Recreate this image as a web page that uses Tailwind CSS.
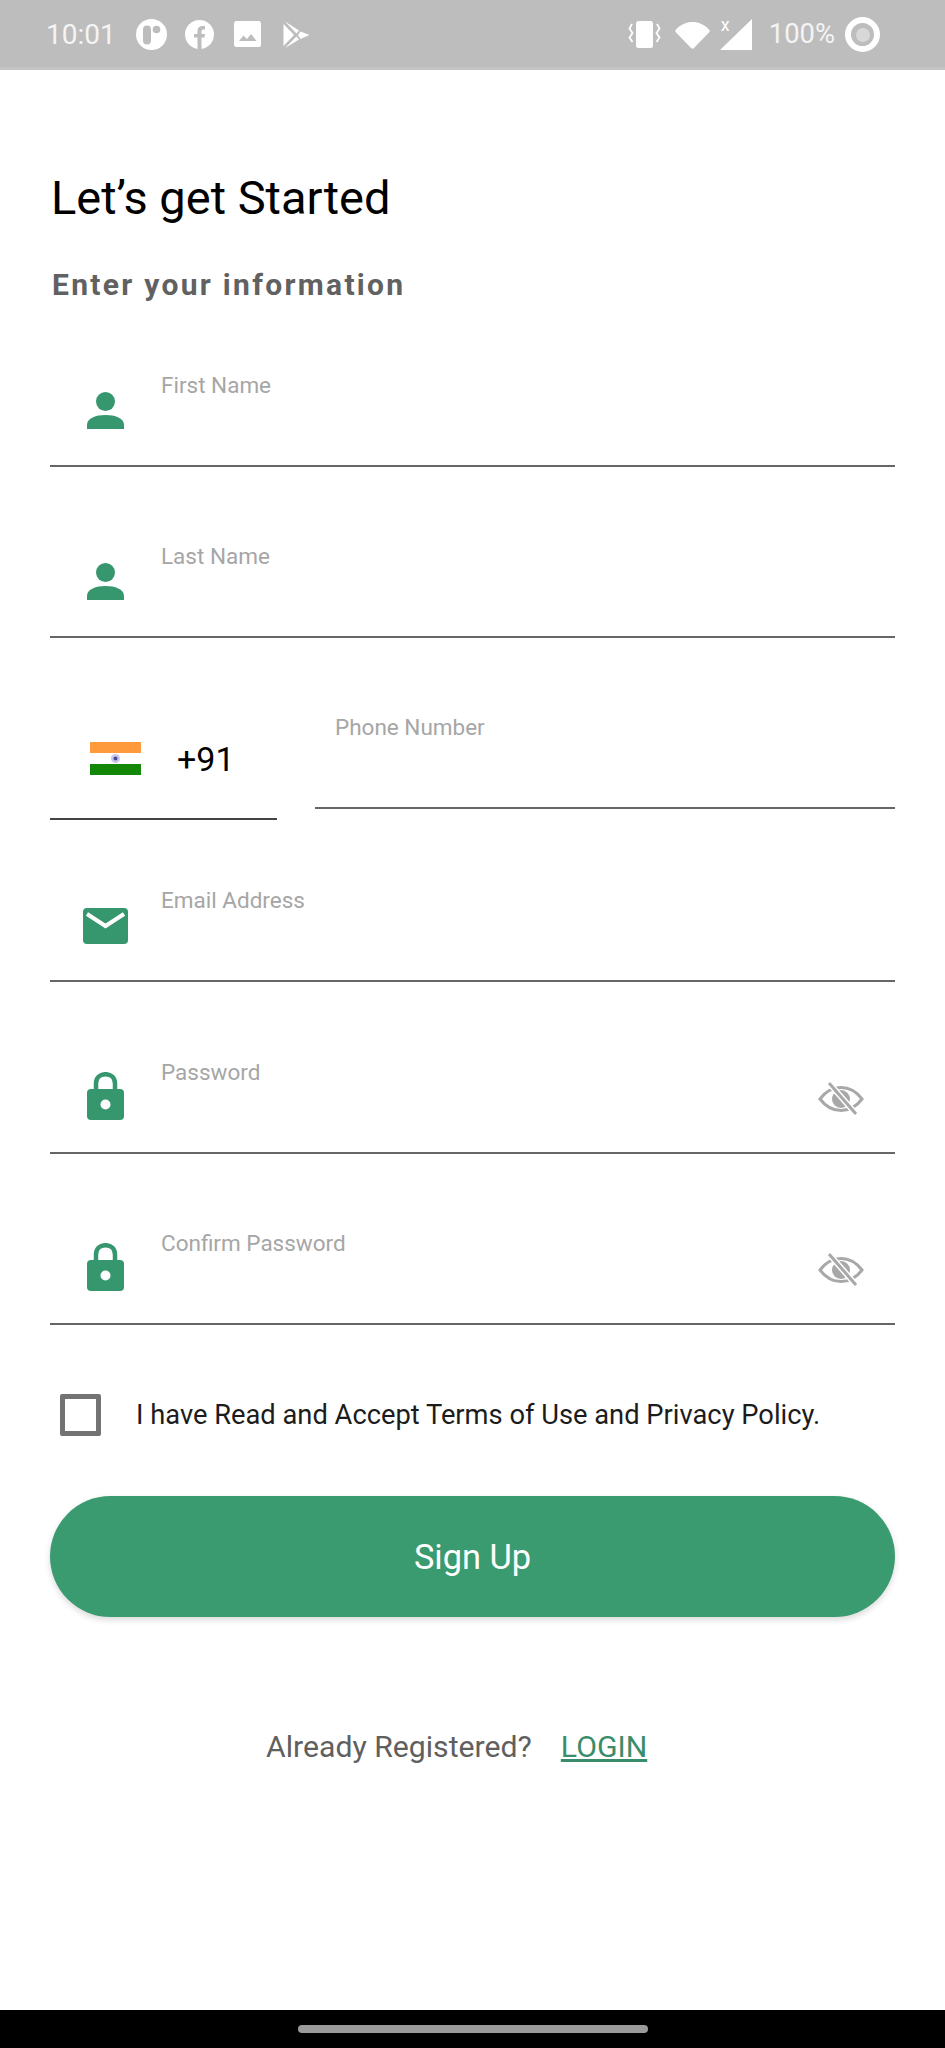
<!DOCTYPE html>
<html lang="en">
<head>
<meta charset="UTF-8">
<meta name="viewport" content="width=device-width, initial-scale=1.0">
<title>Sign Up</title>
<script src="https://cdn.jsdelivr.net/npm/@tailwindcss/browser@4"></script>
</head>
<body class="bg-white font-['Roboto',sans-serif]">
<div class="w-[945px] h-[2048px] flex flex-col overflow-hidden">

  <!-- status bar -->
  <div class="h-[70px] shrink-0 bg-[#bdbdbd] flex items-center pt-[2px] pl-[46px] pr-[65px] text-[#f4f4f4] border-b-[3px] border-[#c4c4c4]">
    <span class="text-[28px] w-[69px]">10:01</span>
    <svg class="ml-[21px] w-[31px] h-[31px]" viewBox="0 0 31 31"><circle cx="15.500" cy="15.500" r="15.500" fill="#fff"/><rect x="7" y="6.500" width="8" height="19" rx="4" fill="#bdbdbd"/><circle cx="20.500" cy="10.500" r="3.800" fill="#bdbdbd"/></svg>
    <svg class="ml-[18px] w-[29px] h-[29px]" viewBox="0 0 29 29"><circle cx="14.500" cy="14.500" r="14.500" fill="#fff"/><path d="M12.500 29V17.500H9V14H12.500V11C12.500 7.500 14.500 6 17.500 6H20V9.500H18.500C17 9.500 16.500 10.200 16.500 11.500V14H20L19.500 17.500H16.500V29Z" fill="#bdbdbd"/></svg>
    <svg class="ml-[20px] w-[27px] h-[27px]" viewBox="0 0 27 27"><rect width="27" height="26" rx="2.500" fill="#fff"/><path d="M5 20L9.500 14.500L13 18L17 13L22.500 20Z" fill="#bdbdbd"/></svg>
    <svg class="ml-[22px] w-[27px] h-[27px]" viewBox="0 0 27 27"><path d="M0.500 3V25L11 14Z M2 0.500L16 9.500L13.500 12.500Z M17.500 10.500L26.500 14L17.500 18L15 14Z M2 27L16 18.500L13.500 15.500Z" fill="#fff"/></svg>

    <svg class="ml-auto w-[33px] h-[27px]" viewBox="0 0 33 27"><rect x="8" y="0" width="17" height="27" rx="2.500" fill="#fff"/><path d="M4 3L1.500 7.500L4.500 12L1.500 16.500L4.500 21M29 3L31.500 7.500L28.500 12L31.500 16.500L28.500 21" fill="none" stroke="#fff" stroke-width="1.800"/></svg>
    <svg class="ml-[14px] w-[35px] h-[28px]" viewBox="0 0 35 28"><path d="M1 8.500C10 -1.500 25 -1.500 34 8.500C35 9.500 35 10.500 34 11.500L19 27C18 28 17 28 16 27L1 11.500C0 10.500 0 9.500 1 8.500Z" fill="#fff"/></svg>
    <div class="ml-[10px] relative w-[32px] h-[31px]">
      <svg class="absolute inset-0 w-[32px] h-[31px]" viewBox="0 0 32 31"><path d="M32 0V31H0Z" fill="#fff"/></svg>
      <span class="absolute left-[1px] top-[-3px] text-[18px] leading-[18px] text-white">x</span>
    </div>
    <span class="ml-[17px] text-[27.400px]">100%</span>
    <div class="ml-[10px] w-[35px] h-[35px] rounded-full border-[6px] border-white flex items-center justify-center">
      <div class="w-[14px] h-[14px] rounded-full bg-[#d8d8d8]"></div>
    </div>
  </div>

  <div class="flex-1 pl-[50px] pr-[50px] flex flex-col">
    <h1 class="mt-[100px] text-[47px] leading-[56px] pl-px text-black font-normal">Let’s get Started</h1>
    <p class="mt-[41px] text-[30px] leading-[36px] font-bold tracking-[2.300px] text-[#616161] pl-[2px]">Enter your information</p>

    <!-- first name -->
    <div class="mt-[69px] h-[95px] border-b-2 border-[#666] flex">
      <div class="w-[111px] flex justify-center pt-[20px]">
        <svg class="w-[37px] h-[37px]" viewBox="0 0 37 37"><circle cx="18.500" cy="9.500" r="9.500" fill="#36966d"/><path d="M0 37V33C0 26 9 23 18.500 23S37 26 37 33V37Z" fill="#36966d"/></svg>
      </div>
      <span class="text-[22.500px] leading-[26px] text-[#a6a6a6]">First Name</span>
    </div>

    <!-- last name -->
    <div class="mt-[76px] h-[95px] border-b-2 border-[#666] flex">
      <div class="w-[111px] flex justify-center pt-[20px]">
        <svg class="w-[37px] h-[37px]" viewBox="0 0 37 37"><circle cx="18.500" cy="9.500" r="9.500" fill="#36966d"/><path d="M0 37V33C0 26 9 23 18.500 23S37 26 37 33V37Z" fill="#36966d"/></svg>
      </div>
      <span class="text-[22.500px] leading-[26px] text-[#a6a6a6]">Last Name</span>
    </div>

    <!-- phone -->
    <div class="mt-[76px] flex items-start gap-[38px]">
      <div class="w-[227px] h-[106px] border-b-2 border-[#444] flex items-start pt-[25px] pl-[40px]">
        <svg class="w-[51px] h-[33px] mt-[3px]" viewBox="0 0 51 33"><rect width="51" height="11" fill="#ff9a3c"/><rect y="22" width="51" height="11" fill="#138808"/><circle cx="25.500" cy="16.500" r="4.500" fill="#c8c8ea"/><circle cx="25.500" cy="16.500" r="2" fill="#4a4a9a"/></svg>
        <span class="ml-[36px] text-[34px] leading-[40px] text-black">+91</span>
      </div>
      <div class="flex-1 h-[95px] border-b-2 border-[#666] pl-[20px]">
        <span class="text-[22.500px] leading-[26px] text-[#a6a6a6]">Phone Number</span>
      </div>
    </div>

    <!-- email -->
    <div class="mt-[67px] h-[95px] border-b-2 border-[#666] flex">
      <div class="w-[111px] flex justify-center pt-[21px]">
        <svg class="w-[45px] h-[36px]" viewBox="0 0 45 36"><rect width="45" height="36" rx="4" fill="#36966d"/><path d="M4 6L22.500 18L41 6" fill="none" stroke="#fff" stroke-width="4"/></svg>
      </div>
      <span class="text-[22.500px] leading-[26px] text-[#a6a6a6]">Email Address</span>
    </div>

    <!-- password -->
    <div class="mt-[77px] h-[95px] border-b-2 border-[#666] flex">
      <div class="w-[111px] flex justify-center pt-[13px]">
        <svg class="w-[37px] h-[48px]" viewBox="0 0 37 48"><path d="M9 18V11.500C9 5.500 13 2.200 18.500 2.200S28 5.500 28 11.500V18" fill="none" stroke="#36966d" stroke-width="4.500"/><rect y="17" width="37" height="31" rx="4" fill="#36966d"/><circle cx="18.500" cy="32.500" r="5" fill="#fff"/></svg>
      </div>
      <span class="text-[22.500px] leading-[26px] text-[#a6a6a6]">Password</span>
      <svg class="ml-auto mr-[31px] mt-[23px] w-[46px] h-[33px]" viewBox="0 0 46 33"><path d="M2 17C8 9 15 5.500 23 5.500S38 9 44 17C38 25 31 28.500 23 28.500S8 25 2 17Z" fill="none" stroke="#a8a8a8" stroke-width="3"/><circle cx="23" cy="17" r="9" fill="#a8a8a8"/><path d="M11 1L38 32" stroke="#fff" stroke-width="6"/><path d="M11 1L38 32" stroke="#a8a8a8" stroke-width="3"/></svg>
    </div>

    <!-- confirm password -->
    <div class="mt-[76px] h-[95px] border-b-2 border-[#666] flex">
      <div class="w-[111px] flex justify-center pt-[13px]">
        <svg class="w-[37px] h-[48px]" viewBox="0 0 37 48"><path d="M9 18V11.500C9 5.500 13 2.200 18.500 2.200S28 5.500 28 11.500V18" fill="none" stroke="#36966d" stroke-width="4.500"/><rect y="17" width="37" height="31" rx="4" fill="#36966d"/><circle cx="18.500" cy="32.500" r="5" fill="#fff"/></svg>
      </div>
      <span class="text-[22.500px] leading-[26px] text-[#a6a6a6]">Confirm Password</span>
      <svg class="ml-auto mr-[31px] mt-[23px] w-[46px] h-[33px]" viewBox="0 0 46 33"><path d="M2 17C8 9 15 5.500 23 5.500S38 9 44 17C38 25 31 28.500 23 28.500S8 25 2 17Z" fill="none" stroke="#a8a8a8" stroke-width="3"/><circle cx="23" cy="17" r="9" fill="#a8a8a8"/><path d="M11 1L38 32" stroke="#fff" stroke-width="6"/><path d="M11 1L38 32" stroke="#a8a8a8" stroke-width="3"/></svg>
    </div>

    <!-- terms -->
    <div class="mt-[69px] flex items-center pl-[10px]">
      <div class="w-[41px] h-[42px] border-[5px] border-[#737373] rounded-[2px]"></div>
      <span class="ml-[35px] text-[27.300px] leading-[32px] text-[#1c1c1c]">I have Read and Accept Terms of Use and Privacy Policy.</span>
    </div>

    <!-- button -->
    <button class="mt-[60px] h-[121px] w-full pt-[2px] rounded-full bg-[#3a9a70] text-white text-[34.400px] shadow-[0_3px_6px_rgba(0,0,0,0.15)]">Sign Up</button>

    <div class="mt-[112px] pl-[216px] flex items-center gap-[29px] text-[30.200px] leading-[36px]">
      <span class="text-[#5f5f5f]">Already Registered?</span>
      <a class="text-[#3a8d6c] underline underline-offset-[2px]">LOGIN</a>
    </div>
  </div>

  <!-- nav bar -->
  <div class="h-[38px] shrink-0 bg-black flex items-center justify-center">
    <div class="w-[350px] h-[8px] rounded-full bg-[#9a9a9a]"></div>
  </div>
</div>
</body>
</html>
